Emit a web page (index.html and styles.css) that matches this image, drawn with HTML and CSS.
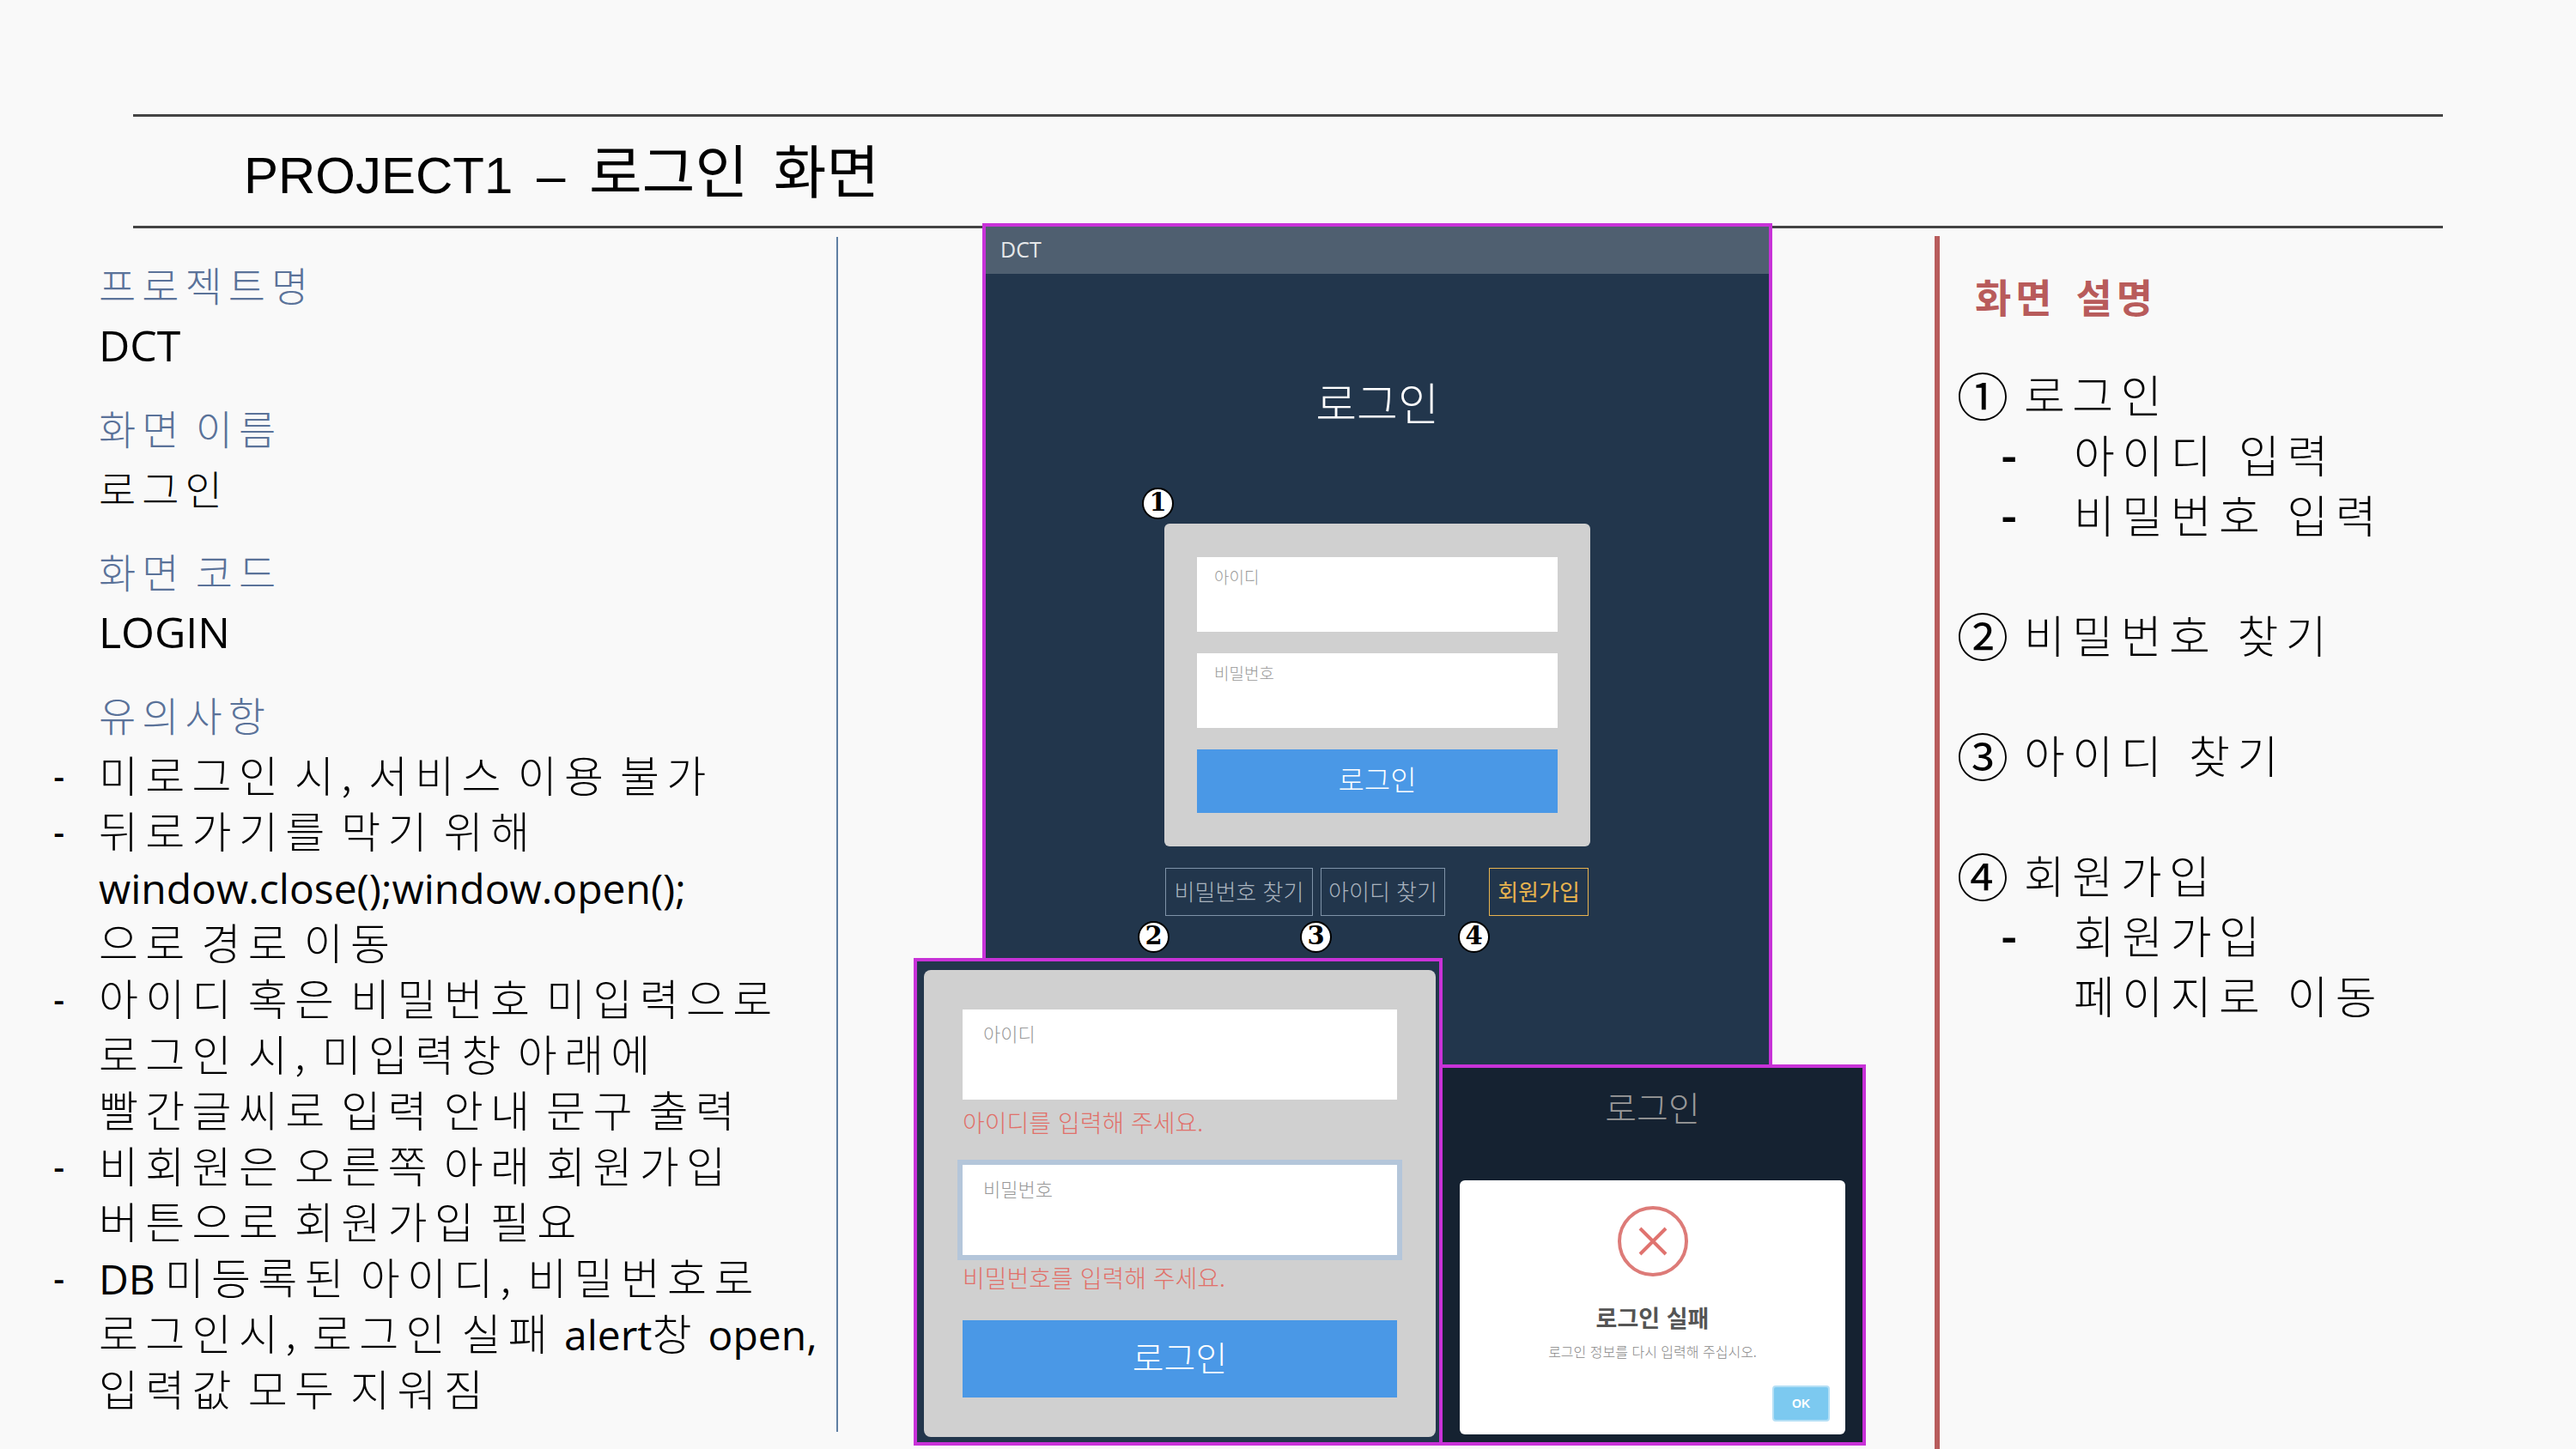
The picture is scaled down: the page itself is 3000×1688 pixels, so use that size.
FILE: index.html
```html
<!DOCTYPE html>
<html lang="ko">
<head>
    <meta charset="UTF-8">
    <title>PROJECT1 - 로그인 화면</title>
    <link rel="stylesheet" href="styles.css">
</head>
<body>
    <div class="slide">
        <header class="slide-head">
            <h1>PROJECT1 – <span class="h1-kr">로그인 화면</span></h1>
        </header>

        <div class="slide-body">
            <section class="info">
                <div class="field">
                    <div class="label">프로젝트명</div>
                    <div class="value"><span class="latin">DCT</span></div>
                </div>
                <div class="field">
                    <div class="label">화면 이름</div>
                    <div class="value">로그인</div>
                </div>
                <div class="field">
                    <div class="label">화면 코드</div>
                    <div class="value"><span class="latin">LOGIN</span></div>
                </div>
                <div class="label">유의사항</div>
                <ul class="notes">
                    <li><b class="dash">-</b><span>미로그인 시, 서비스 이용 불가</span></li>
                    <li><b class="dash">-</b><span>뒤로가기를 막기 위해<br><span class="latin">window.close();window.open();</span><br>으로 경로 이동</span></li>
                    <li><b class="dash">-</b><span>아이디 혹은 비밀번호 미입력으로<br>로그인 시, 미입력창 아래에<br>빨간글씨로 입력 안내 문구 출력</span></li>
                    <li><b class="dash">-</b><span>비회원은 오른쪽 아래 회원가입<br>버튼으로 회원가입 필요</span></li>
                    <li><b class="dash">-</b><span><span class="latin">DB</span> 미등록된 아이디, 비밀번호로<br>로그인시, 로그인 실패 <span class="latin">alert</span>창 <span class="latin">open,</span><br>입력값 모두 지워짐</span></li>
                </ul>
            </section>

            <section class="desc">
                <h2>화면 설명</h2>
                <div class="desc-group">
                    <div class="desc-row"><span class="num">①</span>로그인</div>
                    <div class="desc-sub"><span class="sub-dash">-</span>아이디 입력</div>
                    <div class="desc-sub"><span class="sub-dash">-</span>비밀번호 입력</div>
                </div>
                <div class="desc-group">
                    <div class="desc-row"><span class="num">②</span>비밀번호 찾기</div>
                </div>
                <div class="desc-group">
                    <div class="desc-row"><span class="num">③</span>아이디 찾기</div>
                </div>
                <div class="desc-group">
                    <div class="desc-row"><span class="num">④</span>회원가입</div>
                    <div class="desc-sub"><span class="sub-dash">-</span>회원가입</div>
                    <div class="desc-sub"><span class="sub-dash"></span>페이지로 이동</div>
                </div>
            </section>
        </div>

        <!-- captured screens, overlapping on the slide -->
        <div class="win win-login">
            <div class="win-bar">DCT</div>
            <div class="login-title">로그인</div>
            <div class="login-card">
                <div class="input">아이디</div>
                <div class="input">비밀번호</div>
                <div class="login-btn">로그인</div>
            </div>
            <div class="links">
                <span class="link link-pw">비밀번호 찾기</span>
                <span class="link link-id">아이디 찾기</span>
                <span class="link link-join">회원가입</span>
            </div>
        </div>
        <span class="badge badge-1">1</span>
        <span class="badge badge-2">2</span>
        <span class="badge badge-3">3</span>
        <span class="badge badge-4">4</span>

        <div class="win win-error">
            <div class="error-card">
                <div class="input input-lg">아이디</div>
                <div class="error-msg">아이디를 입력해 주세요.</div>
                <div class="input input-lg input-focus">비밀번호</div>
                <div class="error-msg">비밀번호를 입력해 주세요.</div>
                <div class="login-btn login-btn-lg">로그인</div>
            </div>
        </div>

        <div class="win win-alert">
            <div class="alert-title">로그인</div>
            <div class="modal">
                <svg class="modal-icon" viewBox="0 0 82 82">
                    <circle cx="41" cy="41" r="39" fill="none" stroke="#dd7b78" stroke-width="4"/>
                    <path d="M26 26 L56 56 M56 26 L26 56" fill="none" stroke="#e0736f" stroke-width="4"/>
                </svg>
                <div class="modal-title">로그인 실패</div>
                <div class="modal-text">로그인 정보를 다시 입력해 주십시오.</div>
                <div class="modal-foot"><span class="ok-btn">OK</span></div>
            </div>
        </div>
    </div>
</body>
</html>
```
FILE: styles.css
```css
* {
    box-sizing: border-box;
}
body {
    margin: 0;
    background-color: #f9f9f9;
    font-family: "Noto Sans CJK KR", "Liberation Sans", sans-serif;
    color: #000;
}
.slide {
    position: relative;
    width: 3000px;
    height: 1688px;
    overflow: hidden;
}
.latin {
    font-family: "Open Sans", "Noto Sans CJK KR", sans-serif;
    font-size: 50px;
    font-weight: 400;
    letter-spacing: 0;
    word-spacing: 0;
    line-height: 1;
}

/* header */
.slide-head {
    height: 133px;
    margin: 133px 155px 0;
    padding-left: 129px;
    border-top: 3px solid #444;
    border-bottom: 3px solid #444;
}
h1 {
    margin: 0;
    font-family: "Liberation Sans", "Noto Sans CJK KR", sans-serif;
    font-size: 60px;
    font-weight: 400;
    line-height: 138px;
    word-spacing: 11px;
    white-space: nowrap;
}
.h1-kr {
    font-family: "Noto Sans CJK KR", sans-serif;
    font-size: 67px;
    font-weight: 400;
    line-height: 1;
}

.slide-body {
    display: flex;
    justify-content: space-between;
    height: 1422px;
}

/* left column */
.info {
    width: 976px;
    height: 1392px;
    margin-top: 10px;
    padding: 20px 0 0 115px;
    border-right: 2px solid #5f7fa3;
    font-size: 47px;
    font-weight: 300;
    letter-spacing: 7px;
    word-spacing: -8px;
    white-space: nowrap;
}
.field {
    margin-bottom: 27px;
}
.label {
    height: 70px;
    line-height: 70px;
    color: #5a7299;
}
.value {
    height: 70px;
    line-height: 70px;
}
.notes {
    list-style: none;
    margin: 2px 0 0 -53px;
    padding: 0;
    font-size: 50px;
    letter-spacing: 8.3px;
    word-spacing: -11.5px;
    line-height: 65px;
}
.notes li {
    display: flex;
}
.notes .latin {
    font-size: 48px;
}
.dash {
    width: 53px;
    height: 65px;
    font-weight: 700;
    font-size: 36px;
    line-height: 75px;
}

/* right column */
.desc {
    width: 747px;
    margin-top: 9px;
    padding-top: 34px;
    border-left: 6px solid #b85c5c;
    font-size: 52px;
    font-weight: 300;
    letter-spacing: 8.5px;
    word-spacing: 0;
    line-height: 70px;
    white-space: nowrap;
}
.desc h2 {
    margin: 0 0 45px 41px;
    font-size: 46px;
    font-weight: 700;
    letter-spacing: 5px;
    word-spacing: 5px;
    line-height: 70px;
    color: #b85b5b;
}
.desc-group {
    margin: 0 0 70px 20px;
}
.desc-row {
    display: flex;
}
.num {
    width: 78px;
    font-size: 60px;
    font-weight: 400;
    letter-spacing: 0;
}
.desc-sub {
    display: flex;
    height: 70px;
    padding-left: 51px;
}
.sub-dash {
    width: 85px;
    height: 70px;
    font-weight: 700;
    line-height: 78px;
}

/* screens */
.win {
    position: absolute;
    border: 4px solid #c832d8;
    background-color: #22364c;
}
.win-login {
    left: 1144px;
    top: 260px;
    width: 920px;
    height: 990px;
}
.win-bar {
    height: 55px;
    padding-left: 17px;
    background-color: #4f5f70;
    color: #e6e8ea;
    font-family: "Open Sans", sans-serif;
    font-size: 25px;
    line-height: 53px;
}
.login-title {
    margin-top: 119px;
    text-align: center;
    color: #fff;
    font-size: 52px;
    font-weight: 300;
    line-height: 60px;
}
.login-card {
    display: flex;
    flex-direction: column;
    gap: 25px;
    width: 496px;
    margin: 112px auto 0;
    padding: 39px 38px;
    background-color: #d0d0d0;
    border-radius: 6px;
}
.input {
    height: 87px;
    padding: 10px 20px;
    background-color: #fff;
    color: #999;
    font-size: 19px;
    font-weight: 300;
    line-height: 26px;
}
.login-btn {
    height: 74px;
    background-color: #4a98e6;
    color: #fff;
    font-size: 33px;
    font-weight: 300;
    line-height: 68px;
    text-align: center;
}
.links {
    display: flex;
    gap: 9px;
    width: 496px;
    margin: 25px auto 0;
    padding: 0 2px 0 1px;
}
.link {
    height: 56px;
    border: 1px solid #7f93a8;
    color: #aab4bf;
    font-size: 26px;
    font-weight: 300;
    line-height: 52px;
    text-align: center;
    white-space: nowrap;
}
.link-pw {
    width: 172px;
}
.link-id {
    width: 145px;
}
.link-join {
    width: 116px;
    margin-left: auto;
    border-color: #e8b34f;
    color: #e8b34f;
    font-weight: 400;
}

.badge {
    position: absolute;
    width: 37px;
    height: 37px;
    border-radius: 50%;
    background-color: #fff;
    border: 2px solid #000;
    color: #000;
    font-family: "DejaVu Serif", serif;
    font-size: 29px;
    font-weight: 700;
    line-height: 31px;
    text-align: center;
}
.badge-1 {
    left: 1330px;
    top: 568px;
}
.badge-2 {
    left: 1325px;
    top: 1073px;
}
.badge-3 {
    left: 1514px;
    top: 1073px;
}
.badge-4 {
    left: 1698px;
    top: 1073px;
}

.win-error {
    left: 1064px;
    top: 1116px;
    width: 616px;
    height: 568px;
}
.error-card {
    height: 544px;
    margin: 10px 4px 0 8px;
    padding: 46px 45px;
    background-color: #d0d0d0;
    border-radius: 8px;
}
.input-lg {
    height: 105px;
    padding: 13px 24px;
    font-size: 22px;
    line-height: 28px;
}
.input-focus {
    margin-top: 29px;
    box-shadow: 0 0 0 6px #b4c6da;
}
.error-msg {
    margin-top: 7px;
    height: 40px;
    color: #e0706a;
    font-size: 28px;
    font-weight: 300;
    line-height: 38px;
    white-space: nowrap;
}
.login-btn-lg {
    height: 90px;
    margin-top: 29px;
    font-size: 40px;
    line-height: 84px;
}

.win-alert {
    left: 1676px;
    top: 1240px;
    width: 497px;
    height: 444px;
    background-color: #152231;
}
.alert-title {
    margin-top: 20px;
    height: 50px;
    color: #999;
    font-size: 40px;
    font-weight: 300;
    line-height: 50px;
    text-align: center;
}
.modal {
    display: flex;
    flex-direction: column;
    align-items: center;
    height: 296px;
    margin: 61px 20px 0;
    padding: 30px 18px 0;
    background-color: #fff;
    border-radius: 6px;
}
.modal-icon {
    width: 82px;
    height: 82px;
}
.modal-title {
    margin-top: 30px;
    color: #555;
    font-size: 27px;
    font-weight: 700;
    line-height: 36px;
}
.modal-text {
    margin-top: 9px;
    color: #888;
    font-size: 16px;
    font-weight: 300;
    line-height: 24px;
}
.modal-foot {
    display: flex;
    justify-content: flex-end;
    width: 100%;
    margin-top: 28px;
}
.ok-btn {
    width: 67px;
    height: 42px;
    border: 2px solid #b5dff5;
    border-radius: 4px;
    background-color: #7cc9f0;
    color: #fff;
    font-family: "Liberation Sans", sans-serif;
    font-size: 14px;
    font-weight: 700;
    line-height: 38px;
    text-align: center;
}
```
